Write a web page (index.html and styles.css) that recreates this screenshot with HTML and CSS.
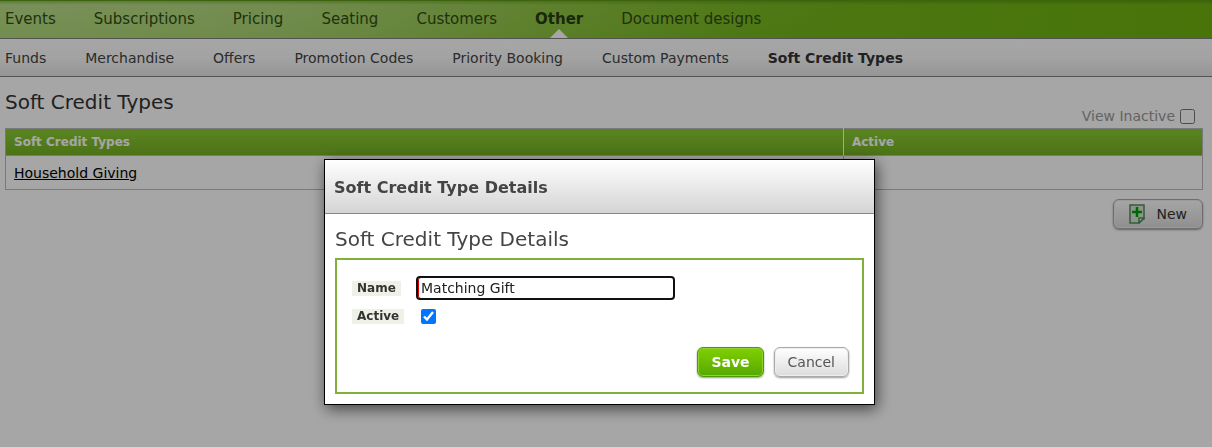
FILE: index.html
```html
<!DOCTYPE html>
<html lang="en">
<head>
  <meta charset="UTF-8">
  <title>Soft Credit Types</title>
  <meta name="viewport" content="width=device-width, initial-scale=1.0">
  <link rel="stylesheet" href="styles.css">
</head>
<body>

<nav class="main-nav">
  <a href="#">Events</a>
  <a href="#">Subscriptions</a>
  <a href="#">Pricing</a>
  <a href="#">Seating</a>
  <a href="#">Customers</a>
  <a href="#" class="active">Other</a>
  <a href="#">Document designs</a>
</nav>

<nav class="sub-nav">
  <a href="#">Funds</a>
  <a href="#">Merchandise</a>
  <a href="#">Offers</a>
  <a href="#">Promotion Codes</a>
  <a href="#">Priority Booking</a>
  <a href="#">Custom Payments</a>
  <a href="#" class="active">Soft Credit Types</a>
</nav>

<main class="content">
  <div class="title-row">
    <h1>Soft Credit Types</h1>
    <div class="inactive">
      <label for="viewInactive">View Inactive</label>
      <input type="checkbox" id="viewInactive">
    </div>
  </div>

  <table class="grid">
    <thead>
      <tr>
        <th class="col-name">Soft Credit Types</th>
        <th>Active</th>
      </tr>
    </thead>
    <tbody>
      <tr>
        <td><a href="#">Household Giving</a></td>
        <td></td>
      </tr>
    </tbody>
  </table>

  <div class="toolbar">
    <button type="button" class="btn btn-new">
      <svg width="16" height="20" viewBox="0 0 16 20" aria-hidden="true">
        <path d="M1 1h14v14h-1l-4 4H1z" fill="#d3e8d3" stroke="#5d8660" stroke-width="1.5"/>
        <path d="M15 14h-5v5z" fill="#f2fff2" stroke="#4f8a55" stroke-width="1.5" stroke-linejoin="round"/>
        <path d="M8 3v10M3 8h10" stroke="#00a000" stroke-width="2.5"/>
      </svg>
      New
    </button>
  </div>
</main>

<div class="overlay">
  <form class="dialog" role="dialog" aria-labelledby="dialogTitle">
    <h2 class="dialog-title" id="dialogTitle">Soft Credit Type Details</h2>
    <div class="dialog-body">
      <h3>Soft Credit Type Details</h3>
      <div class="panel">
        <div class="field">
          <div class="field-label"><label for="name">Name</label></div>
          <input type="text" id="name" class="required" value="Matching Gift">
        </div>
        <div class="field">
          <div class="field-label"><label for="active">Active</label></div>
          <input type="checkbox" id="active" checked>
        </div>
        <div class="buttons">
          <button type="submit" class="btn btn-save">Save</button>
          <button type="button" class="btn">Cancel</button>
        </div>
      </div>
    </div>
  </form>
</div>

</body>
</html>
```

FILE: styles.css
```css
* { box-sizing: border-box; }
body { margin: 0; font-family: Verdana, "DejaVu Sans", sans-serif; font-size: 14px; line-height: 18px; color: #333; background: #fff; }
h1, h2, h3 { margin: 0; }
h1, h3 { font-size: 20px; line-height: 26px; font-weight: normal; }

/* Navigation */
.main-nav, .sub-nav { display: flex; align-items: center; gap: 39px; padding: 0 5px; border-bottom: 1px solid #808080; white-space: nowrap; }
.main-nav a, .sub-nav a { color: #444; text-decoration: none; }
.main-nav { height: 39px; gap: 38px; padding-bottom: 2px; font-size: 15px; border-top: 1px solid #5c9a14;
  background: linear-gradient(rgba(60,110,0,.3), rgba(60,110,0,0) 4px), radial-gradient(ellipse 760px 70px at 100px 0, rgba(255,255,255,.22), rgba(255,255,255,0)), linear-gradient(95deg, #a8d66c 0, #a0d060 280px, #84bf32 560px, #76b71d 750px, #6fb310 100%); }
.main-nav a { position: relative; color: #304d10; }
.main-nav .active { font-weight: bold; color: #283e10; }
.main-nav .active::after { content: ""; position: absolute; left: 50%; bottom: -10px; margin-left: -9px; border: 9px solid transparent; border-top: 0; border-bottom-color: #fff; }
.sub-nav { height: 38px; background: linear-gradient(#fff, #fafafa 50%, #e6e6e6); }
.sub-nav .active { font-weight: bold; color: #333; }

/* List page */
.content { padding: 12px 9px 12px 5px; }
.title-row { display: flex; justify-content: space-between; align-items: flex-start; height: 39px; }
.inactive { display: flex; align-items: center; gap: 5px; padding: 18px 8px 0 0; color: #999; }
input[type="checkbox"] { width: 15px; height: 15px; margin: 0; }
.grid { width: 100%; table-layout: fixed; border-collapse: collapse; border: 1px solid #bbb; }
.grid th { padding: 4px 8px; font-size: 12px; color: #fff; text-align: left; border-left: 1px solid #fff; }
.grid th:first-child { border-left: 0; }
.grid thead tr { background: linear-gradient(#8bcc33, #75b022); }
.grid td { height: 34px; padding: 0 8px; border: 1px solid #bbb; }
.grid a { color: #000; }
.col-name { width: 70%; }
.toolbar { display: flex; justify-content: flex-end; padding-top: 9px; }

/* Buttons */
.btn { height: 30px; padding: 0 13px; font: inherit; color: #555; border: 1px solid #aaa; border-radius: 6px; background: linear-gradient(#fff, #dcdcdc); box-shadow: inset 0 0 0 1px #eee, 0 1px 2px rgba(0,0,0,.4); cursor: pointer; }
.btn-new { display: flex; align-items: center; gap: 11px; padding: 0 15px; color: #333; }
.btn-save { font-weight: bold; color: #fff; border-color: #4d9900; background: linear-gradient(#80d000, #56a800); box-shadow: inset 0 0 0 1px #8dd430, 0 1px 2px rgba(0,0,0,.4); }

/* Dialog */
.overlay { position: fixed; inset: 0; display: flex; justify-content: center; align-items: flex-start; padding: 159px 13px 0 0; background: rgba(0,0,0,.35); }
.dialog { width: 100%; max-width: 551px; background: #fff; border: 1px solid #000; box-shadow: 2px 4px 14px rgba(0,0,0,.6); }
.dialog-title { padding: 17px 9px 14px; font-size: 16px; line-height: 22px; color: #444; border-bottom: 1px solid #888; background: linear-gradient(#fff, #d4d4d4); }
.dialog-body { padding: 12px 10px 10px; }
.dialog-body h3 { color: #444; }
.panel { margin-top: 6px; padding: 16px 13px 15px 15px; border: 2px solid #80b03c; }
.field { display: flex; align-items: center; height: 28px; }
.field:first-child { height: 24px; margin-bottom: 2px; }
.field-label { width: 64px; font-size: 12px; line-height: 15px; font-weight: bold; }
.field-label label { display: inline-block; padding: 0 5px; background: #eef2e6; }
.field input[type="checkbox"] { margin-left: 5px; }
.field input[type="text"] { width: 259px; height: 24px; padding: 0 3px; font: inherit; color: #222; border: 2px solid #111; border-radius: 4px; outline: 0; }
.field .required { box-shadow: inset 1px 0 0 #d00; }
.buttons { display: flex; justify-content: flex-end; gap: 10px; padding-top: 17px; }
```
